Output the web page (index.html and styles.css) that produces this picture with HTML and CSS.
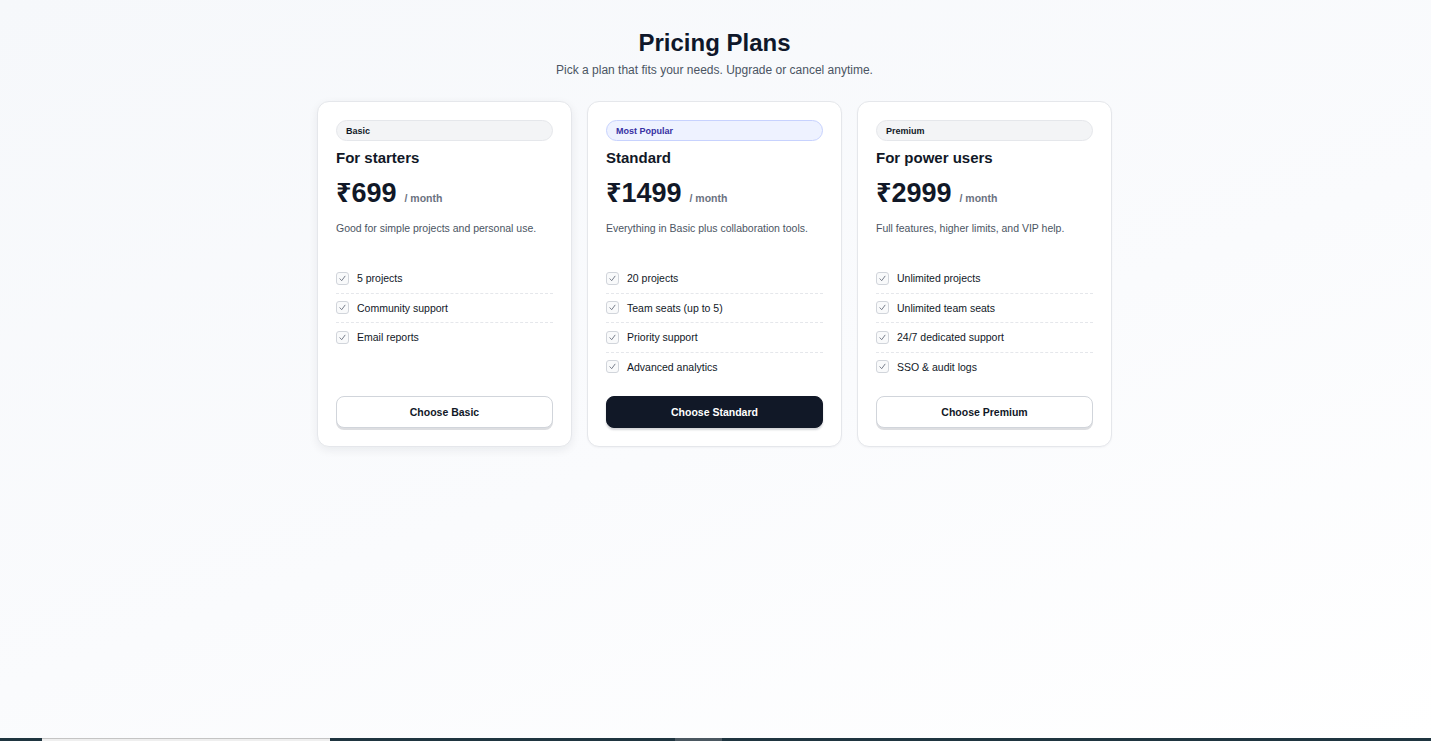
FILE: index.html
```html
<!DOCTYPE html>
<html lang="en">
<head>
<meta charset="utf-8">
<title>Pricing Plans</title>
<link rel="stylesheet" href="styles.css">
</head>
<body>
<div class="page">
  <main class="main">
    <header class="head">
      <h1 class="title">Pricing Plans</h1>
      <p class="subtitle">Pick a plan that fits your needs. Upgrade or cancel anytime.</p>
    </header>
    <section class="plans">
      <article class="card card-raised">
        <span class="badge">Basic</span>
        <h2 class="plan-name">For starters</h2>
        <div class="price"><span class="amount">₹699</span><span class="per">/ month</span></div>
        <p class="desc">Good for simple projects and personal use.</p>
        <ul class="features">
          <li class="feature"><span class="check"><svg viewBox="0 0 13 13" width="13" height="13"><path d="M3.9 6.8 L5.7 8.7 L9 4.2" fill="none" stroke="#6b7280" stroke-width="0.9" stroke-linecap="round" stroke-linejoin="round"/></svg></span>5 projects</li>
          <li class="feature"><span class="check"><svg viewBox="0 0 13 13" width="13" height="13"><path d="M3.9 6.8 L5.7 8.7 L9 4.2" fill="none" stroke="#6b7280" stroke-width="0.9" stroke-linecap="round" stroke-linejoin="round"/></svg></span>Community support</li>
          <li class="feature"><span class="check"><svg viewBox="0 0 13 13" width="13" height="13"><path d="M3.9 6.8 L5.7 8.7 L9 4.2" fill="none" stroke="#6b7280" stroke-width="0.9" stroke-linecap="round" stroke-linejoin="round"/></svg></span>Email reports</li>
        </ul>
        <button class="btn btn-light">Choose Basic</button>
      </article>
      <article class="card">
        <span class="badge badge-popular">Most Popular</span>
        <h2 class="plan-name">Standard</h2>
        <div class="price"><span class="amount">₹1499</span><span class="per">/ month</span></div>
        <p class="desc">Everything in Basic plus collaboration tools.</p>
        <ul class="features">
          <li class="feature"><span class="check"><svg viewBox="0 0 13 13" width="13" height="13"><path d="M3.9 6.8 L5.7 8.7 L9 4.2" fill="none" stroke="#6b7280" stroke-width="0.9" stroke-linecap="round" stroke-linejoin="round"/></svg></span>20 projects</li>
          <li class="feature"><span class="check"><svg viewBox="0 0 13 13" width="13" height="13"><path d="M3.9 6.8 L5.7 8.7 L9 4.2" fill="none" stroke="#6b7280" stroke-width="0.9" stroke-linecap="round" stroke-linejoin="round"/></svg></span>Team seats (up to 5)</li>
          <li class="feature"><span class="check"><svg viewBox="0 0 13 13" width="13" height="13"><path d="M3.9 6.8 L5.7 8.7 L9 4.2" fill="none" stroke="#6b7280" stroke-width="0.9" stroke-linecap="round" stroke-linejoin="round"/></svg></span>Priority support</li>
          <li class="feature"><span class="check"><svg viewBox="0 0 13 13" width="13" height="13"><path d="M3.9 6.8 L5.7 8.7 L9 4.2" fill="none" stroke="#6b7280" stroke-width="0.9" stroke-linecap="round" stroke-linejoin="round"/></svg></span>Advanced analytics</li>
        </ul>
        <button class="btn btn-dark">Choose Standard</button>
      </article>
      <article class="card">
        <span class="badge">Premium</span>
        <h2 class="plan-name">For power users</h2>
        <div class="price"><span class="amount">₹2999</span><span class="per">/ month</span></div>
        <p class="desc">Full features, higher limits, and VIP help.</p>
        <ul class="features">
          <li class="feature"><span class="check"><svg viewBox="0 0 13 13" width="13" height="13"><path d="M3.9 6.8 L5.7 8.7 L9 4.2" fill="none" stroke="#6b7280" stroke-width="0.9" stroke-linecap="round" stroke-linejoin="round"/></svg></span>Unlimited projects</li>
          <li class="feature"><span class="check"><svg viewBox="0 0 13 13" width="13" height="13"><path d="M3.9 6.8 L5.7 8.7 L9 4.2" fill="none" stroke="#6b7280" stroke-width="0.9" stroke-linecap="round" stroke-linejoin="round"/></svg></span>Unlimited team seats</li>
          <li class="feature"><span class="check"><svg viewBox="0 0 13 13" width="13" height="13"><path d="M3.9 6.8 L5.7 8.7 L9 4.2" fill="none" stroke="#6b7280" stroke-width="0.9" stroke-linecap="round" stroke-linejoin="round"/></svg></span>24/7 dedicated support</li>
          <li class="feature"><span class="check"><svg viewBox="0 0 13 13" width="13" height="13"><path d="M3.9 6.8 L5.7 8.7 L9 4.2" fill="none" stroke="#6b7280" stroke-width="0.9" stroke-linecap="round" stroke-linejoin="round"/></svg></span>SSO &amp; audit logs</li>
        </ul>
        <button class="btn btn-light">Choose Premium</button>
      </article>
    </section>
  </main>
  <footer class="strip">
    <span class="seg seg-dark1"></span>
    <span class="seg seg-light"></span>
    <span class="seg seg-dark2"></span>
    <span class="seg seg-grey"></span>
    <span class="seg seg-dark3"></span>
  </footer>
</div>
</body>
</html>
```
FILE: styles.css
```css
* { box-sizing: border-box; }

html, body {
  margin: 0;
  padding: 0;
  height: 100%;
}

body {
  font-family: "Liberation Sans", Arial, "Noto Sans", "DejaVu Sans", sans-serif;
  color: #111827;
  background: linear-gradient(160deg, #f6f8fb 0%, #fafbfd 55%, #ffffff 100%);
}

.page {
  min-height: 100vh;
  display: flex;
  flex-direction: column;
}

.main {
  flex: 1;
  display: flex;
  flex-direction: column;
  align-items: center;
  padding-top: 29px;
}

.head {
  text-align: center;
  transform: translateX(-1px);
}

.title {
  margin: 0;
  font-size: 24px;
  line-height: 28px;
  font-weight: 700;
  color: #0f172a;
}

.subtitle {
  margin: 5px 0 0;
  font-size: 12px;
  line-height: 16px;
  color: #4b5563;
}

.plans {
  margin-top: 23px;
  display: grid;
  grid-template-columns: repeat(3, 255px);
  gap: 15px;
  transform: translateX(-1px);
}

.card {
  display: flex;
  flex-direction: column;
  align-items: stretch;
  background: #ffffff;
  border: 1px solid #e5e7eb;
  border-radius: 12px;
  padding: 18px 18px 18px;
  box-shadow: 0 1px 2px rgba(17, 24, 39, 0.04);
}

.card-raised {
  box-shadow: 0 3px 10px rgba(17, 24, 39, 0.07);
}

.badge {
  display: flex;
  align-items: center;
  height: 21px;
  padding: 0 9px;
  border: 1px solid #e5e7eb;
  border-radius: 999px;
  background: #f3f4f6;
  font-size: 9px;
  font-weight: 700;
  color: #111827;
}

.badge-popular {
  background: #eef2ff;
  border-color: #c7d2fe;
  color: #3730a3;
}

.plan-name {
  margin: 8px 0 0;
  font-size: 15px;
  line-height: 18px;
  font-weight: 700;
  color: #111827;
}

.price {
  margin-top: 10px;
  display: flex;
  align-items: baseline;
  gap: 8px;
  height: 32px;
}

.amount {
  font-size: 27px;
  line-height: 32px;
  font-weight: 700;
  color: #111827;
}

.per {
  font-size: 10.5px;
  font-weight: 700;
  color: #6b7280;
}

.desc {
  margin: 12px 0 0;
  font-size: 10.5px;
  line-height: 15px;
  color: #4b5563;
}

.features {
  list-style: none;
  margin: 28px 0 15px;
  padding: 0;
}

.feature {
  display: flex;
  align-items: center;
  gap: 8px;
  padding: 7px 0;
  font-size: 10.5px;
  line-height: 14.5px;
  color: #111827;
  border-bottom: 1px dashed #e5e7eb;
}

.feature:last-child {
  border-bottom: none;
}

.check {
  display: flex;
  width: 13px;
  height: 13px;
  border: 1px solid #d1d5db;
  border-radius: 3px;
  background: #f9fafb;
  align-items: center;
  justify-content: center;
}

.check svg {
  display: block;
  flex: none;
}

.btn {
  margin-top: auto;
  height: 32px;
  border-radius: 8px;
  font-family: inherit;
  font-size: 10.5px;
  font-weight: 700;
  cursor: pointer;
}

.btn-light {
  background: #ffffff;
  color: #111827;
  border: 1px solid #d1d5db;
  box-shadow: 0 2px 0 rgba(17, 24, 39, 0.14);
}

.btn-dark {
  background: #111827;
  color: #ffffff;
  border: 1px solid #111827;
  box-shadow: 0 2px 2px rgba(17, 24, 39, 0.18);
}

.strip {
  height: 3px;
  display: flex;
}

.seg { display: block; height: 3px; }
.seg-dark1 { width: 42px; background: #1f3540; }
.seg-light { width: 288px; background: #efefef; border-top: 1px solid #c4c4c4; }
.seg-dark2 { width: 345px; background: #1f3540; }
.seg-grey { width: 47px; background: #4b5861; }
.seg-dark3 { flex: 1; background: #1f3540; }
```
